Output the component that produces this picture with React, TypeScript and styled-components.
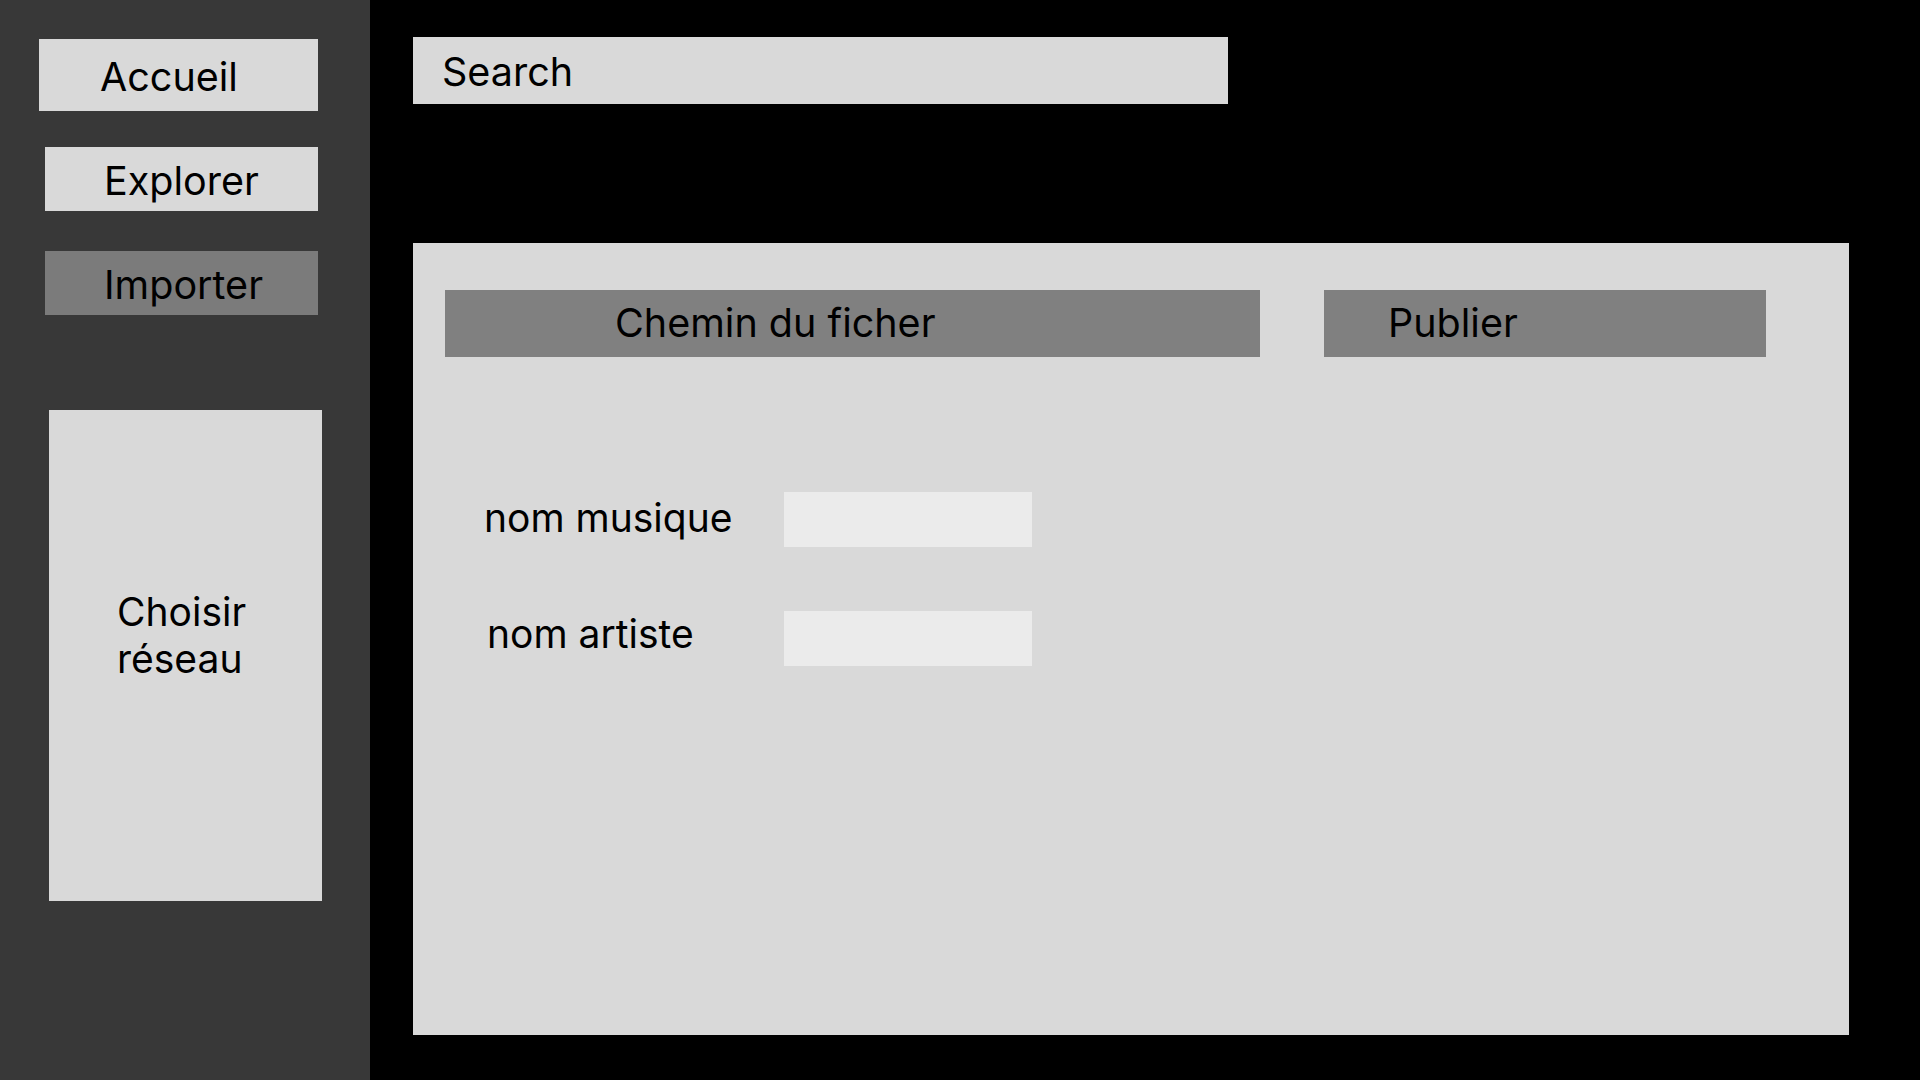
import React from "react";
import styled, { createGlobalStyle } from "styled-components";

const GlobalStyle = createGlobalStyle`
  html, body {
    margin: 0;
    padding: 0;
    background: #000000;
    font-family: Inter, "Noto Sans", "Liberation Sans", sans-serif;
    color: #000000;
  }
  * { box-sizing: border-box; }
`;

const Page = styled.div`
  display: flex;
  width: 1920px;
  height: 1080px;
  background: #000000;
  overflow: hidden;
`;

const Sidebar = styled.nav`
  width: 370px;
  flex: none;
  background: #383838;
  display: flex;
  flex-direction: column;
  padding-top: 39px;
`;

const NavButton = styled.div<{ $left: number; $width: number; $height: number; $top: number; $pad: number; $active?: boolean }>`
  margin-top: ${(p) => p.$top}px;
  margin-left: ${(p) => p.$left}px;
  width: ${(p) => p.$width}px;
  height: ${(p) => p.$height}px;
  flex: none;
  background: ${(p) => (p.$active ? "#7b7b7b" : "#d9d9d9")};
  display: flex;
  align-items: center;
  padding-left: ${(p) => p.$pad}px;
  padding-top: 5px;
  font-size: 39.5px;
  line-height: 1;
`;

const NetworkBox = styled.div`
  margin-top: 95px;
  margin-left: 49px;
  width: 273px;
  height: 491px;
  flex: none;
  background: #d9d9d9;
  display: flex;
  align-items: center;
  padding-left: 68px;
  padding-bottom: 42px;
  font-size: 39px;
  line-height: 47px;
`;

const Main = styled.main`
  flex: 1;
  display: flex;
  flex-direction: column;
  padding-left: 43px;
  padding-top: 37px;
`;

const SearchBar = styled.div`
  width: 815px;
  height: 67px;
  background: #d9d9d9;
  display: flex;
  align-items: center;
  padding-left: 29px;
  padding-top: 5px;
  font-size: 39.5px;
  line-height: 1;
`;

const Panel = styled.section`
  margin-top: 139px;
  width: 1436px;
  height: 792px;
  background: #d9d9d9;
  display: flex;
  flex-direction: column;
  padding: 47px 0 0 32px;
`;

const ActionRow = styled.div`
  display: flex;
  gap: 64px;
`;

const ActionButton = styled.div<{ $width: number; $pad: number }>`
  width: ${(p) => p.$width}px;
  height: 67px;
  background: #808080;
  display: flex;
  align-items: center;
  padding-left: ${(p) => p.$pad}px;
  font-size: 39.5px;
  line-height: 1;
`;

const Form = styled.div`
  margin-top: 135px;
  margin-left: -32px;
  display: flex;
  flex-direction: column;
  gap: 64px;
`;

const FieldRow = styled.div`
  display: grid;
  grid-template-columns: 371px 248px;
  align-items: center;
`;

const FieldLabel = styled.div<{ $indent: number; $lift: number }>`
  padding-left: ${(p) => p.$indent}px;
  padding-bottom: ${(p) => p.$lift}px;
  font-size: 39px;
  line-height: 1;
`;

const FieldInput = styled.div`
  height: 55px;
  background: #ebebeb;
`;

export default function App() {
  return (
    <>
      <GlobalStyle />
      <Page>
        <Sidebar>
          <NavButton $top={0} $left={39} $width={279} $height={72} $pad={61}>
            Accueil
          </NavButton>
          <NavButton $top={36} $left={45} $width={273} $height={64} $pad={59}>
            Explorer
          </NavButton>
          <NavButton $top={40} $left={45} $width={273} $height={64} $pad={59} $active>
            Importer
          </NavButton>
          <NetworkBox>
            Choisir
            <br />
            réseau
          </NetworkBox>
        </Sidebar>
        <Main>
          <SearchBar>Search</SearchBar>
          <Panel>
            <ActionRow>
              <ActionButton $width={815} $pad={170}>
                Chemin du ficher
              </ActionButton>
              <ActionButton $width={442} $pad={64}>
                Publier
              </ActionButton>
            </ActionRow>
            <Form>
              <FieldRow>
                <FieldLabel $indent={71} $lift={4}>nom musique</FieldLabel>
                <FieldInput />
              </FieldRow>
              <FieldRow>
                <FieldLabel $indent={74} $lift={11}>nom artiste</FieldLabel>
                <FieldInput />
              </FieldRow>
            </Form>
          </Panel>
        </Main>
      </Page>
    </>
  );
}
